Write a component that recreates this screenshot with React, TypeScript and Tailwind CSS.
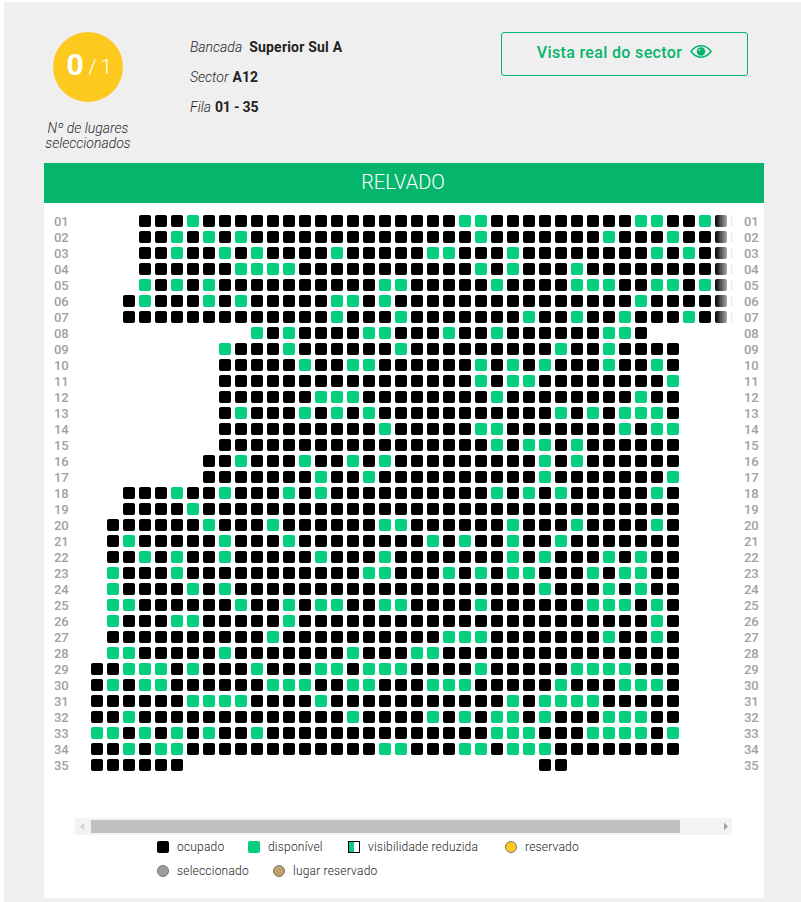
const rows: [number, number, number[]][] = [
  [3, 40, [6, 23, 24, 34, 35, 38]],
  [3, 40, [5, 7, 9, 24, 32, 36]],
  [3, 40, [5, 8, 10, 15, 21, 22, 26, 35, 37]],
  [3, 40, [9, 10, 11, 12, 24, 26, 30]],
  [3, 40, [3, 5, 7, 18, 19, 25, 30, 31, 32, 35, 36, 38]],
  [2, 40, [3, 7, 9, 15, 16, 18, 34]],
  [2, 40, [15, 19, 27, 30, 33, 37]],
  [10, 34, [10, 12, 17, 18, 22, 25, 32, 33]],
  [8, 36, [8, 12, 19, 29, 32]],
  [8, 36, [13, 16, 17, 24, 26, 28, 32, 35]],
  [8, 36, [24, 26, 27, 36]],
  [8, 36, [14, 15, 16, 25, 34]],
  [8, 36, [9, 13, 15, 17, 29, 31, 33, 34, 35]],
  [8, 36, [18, 24, 25, 33, 35, 36]],
  [8, 36, [25, 27, 28, 30]],
  [7, 36, [9, 13, 16, 18, 28, 30]],
  [7, 36, [14, 17, 28, 36]],
  [2, 36, [5, 8, 12, 14, 25, 27, 29, 35]],
  [2, 36, [6]],
  [1, 36, [7, 11, 18, 19, 26, 30, 35]],
  [1, 36, [2, 8, 12, 21, 23, 26, 29]],
  [1, 36, [3, 5, 8, 14, 18, 26, 28, 32, 34]],
  [1, 36, [1, 5, 17, 18, 22, 24, 26, 27, 31, 33, 34]],
  [1, 36, [1, 6, 8, 28, 32, 34]],
  [1, 36, [1, 2, 9, 12, 14, 15, 18, 19, 24, 31, 32, 33, 35]],
  [1, 36, [1, 5, 6, 12, 35]],
  [1, 36, [11, 22, 23, 24, 32, 35]],
  [1, 36, [1, 2, 8, 16, 20, 21]],
  [0, 36, [2, 3, 4, 6, 10, 14, 15, 17, 18, 19, 24, 30, 31, 32, 33]],
  [0, 36, [1, 3, 4, 11, 12, 13, 16, 17, 21, 22, 23, 29, 33, 34, 35]],
  [0, 36, [6, 7, 8, 9, 14, 26, 28, 29, 30, 31]],
  [0, 36, [2, 16, 21, 23, 25, 26, 28, 32, 33, 34]],
  [0, 36, [0, 1, 3, 5, 7, 10, 25, 26, 27, 31, 32, 33, 34, 36]],
  [0, 36, [2, 4, 5, 18, 19, 23, 24, 26, 27, 28]],
  [0, 29, []],
];

const cols = Array.from({ length: 41 }, (_, i) => i);

function seatClass(r: [number, number, number[]], c: number, rowIdx: number) {
  const [start, end, greens] = r;
  if (c < start || c > end) return "invisible";
  if (rowIdx === 34 && c > 5 && c < 28) return "invisible";
  return greens.includes(c) ? "bg-[#05cf7c]" : "bg-black";
}

function Labels({ side }: { side: "l" | "r" }) {
  return (
    <div className={side === "l" ? "w-[47px] shrink-0 pl-[10px]" : "pl-[11px]"}>
      {rows.map((_, i) => (
        <div key={i} className="h-4 leading-[13px] text-[13px] font-medium text-[#a0a0a0] tracking-[-0.2px]">
          {String(i + 1).padStart(2, "0")}
        </div>
      ))}
    </div>
  );
}

function Eye() {
  return (
    <svg width="22" height="13" viewBox="0 0 22 13" fill="none" className="-translate-y-0.5">
      <path d="M0.9 6.5C4 2.6 7 0.8 11 0.8s7 1.8 10.1 5.7C18 10.4 15 12.2 11 12.2S4 10.4 0.9 6.5Z" stroke="#05b56b" strokeWidth="1.5" />
      <circle cx="11" cy="6.5" r="4.2" fill="#05b56b" />
      <circle cx="9.5" cy="5" r="1.1" fill="#9fe3c4" />
    </svg>
  );
}

function Legend({ w, icon, label }: { w: string; icon: React.ReactNode; label: string }) {
  return (
    <div className={`flex items-center gap-2 ${w}`}>
      {icon}
      <span className="text-xs font-light tracking-[0.2px] leading-4 text-[#222]">{label}</span>
    </div>
  );
}

export default function App() {
  return (
    <div className="pt-[2px] pl-1 bg-white h-[902px] overflow-hidden" style={{ fontFamily: "Roboto, 'Liberation Sans', sans-serif" }}>
      <div className="bg-[#efefef] h-[900px] pb-1 flex flex-col">
        <div className="flex h-[161px] shrink-0 pl-10 pr-[53px] pt-[30px]">
          <div className="w-[88px] shrink-0 flex flex-col items-center">
            <div className="w-[70px] h-[70px] rounded-full bg-[#fdc91f] flex items-center justify-center text-white pb-[5px] pl-[2px]">
              <span className="text-[30px] font-bold leading-none">0</span>
              <span className="text-[20px] font-light leading-none ml-[5px] mt-1 tracking-[-0.3px]">/ 1</span>
            </div>
            <div className="mt-[19px] text-[14px] leading-[15px] italic font-light text-center text-[#2a2a2a] whitespace-nowrap">
              Nº de lugares<br />seleccionados
            </div>
          </div>
          <div className="ml-[58px] text-[14px] leading-[30px] text-[#222]">
            <div><span className="italic font-light">Bancada</span><span className="font-bold ml-[7px] tracking-[0.2px]">Superior Sul A</span></div>
            <div><span className="italic font-light">Sector</span><span className="font-bold ml-[4px]">A12</span></div>
            <div><span className="italic font-light">Fila</span><span className="font-bold ml-[4px] tracking-[-0.2px]">01 - 35</span></div>
          </div>
          <button className="ml-auto w-[247px] h-11 rounded-[3px] border border-[#05b56b] flex items-center justify-center gap-2 text-[#05b56b] text-base font-medium tracking-[0.35px] pb-[2px]">
            Vista real do sector
            <Eye />
          </button>
        </div>
        <div className="ml-10 w-[720px] flex-1 bg-white flex flex-col">
          <div className="h-10 bg-[#05b56b] text-white text-[20px] font-light flex items-center justify-center pb-[2px] pr-[2px]">RELVADO</div>
          <div className="flex pt-3">
            <Labels side="l" />
            <div className="relative w-[642px] overflow-hidden">
              {rows.map((r, i) => (
                <div key={i} className="flex gap-1 h-4">
                  {cols.map((c) => (
                    <div key={c} className={`w-3 h-3 shrink-0 rounded-[2px] ${seatClass(r, c, i)}`} />
                  ))}
                </div>
              ))}
              <div className="absolute right-0 top-0 bottom-0 w-[18px] bg-linear-to-r from-white/0 to-white" />
            </div>
            <Labels side="r" />
          </div>
          <div className="ml-[31px] mt-[43px] w-[657px] h-[17px] bg-[#f3f3f3] flex items-center shrink-0">
            <svg width="16" height="13" viewBox="0 0 16 13" className="shrink-0"><path d="M9 2.5v8l-4-4z" fill="#d2d2d2" /></svg>
            <div className="w-[589px] h-[13px] bg-[#c1c1c1]" />
            <svg width="52" height="13" viewBox="0 0 52 13" className="shrink-0"><path d="M44 2.5v8l4-4z" fill="#a3a3a3" /></svg>
          </div>
          <div className="ml-[113px] flex flex-col">
            <div className="flex h-6 items-center">
              <Legend w="w-[91px]" icon={<span className="w-3 h-3 rounded-[2px] bg-black" />} label="ocupado" />
              <Legend w="w-[100px]" icon={<span className="w-3 h-3 rounded-[2px] bg-[#05cf7c]" />} label="disponível" />
              <Legend
                w="w-[157px]"
                icon={
                  <span className="w-3 h-3 border border-black flex">
                    <span className="flex-1 bg-[#05cf7c]" />
                    <span className="flex-1 bg-white" />
                  </span>
                }
                label="visibilidade reduzida"
              />
              <Legend w="" icon={<span className="w-3 h-3 rounded-full bg-[#fdc91f] border border-[#777]" />} label="reservado" />
            </div>
            <div className="flex h-6 items-center">
              <Legend w="w-[116px]" icon={<span className="w-3 h-3 rounded-full bg-[#9a9d9c] border border-[#777]" />} label="seleccionado" />
              <Legend w="" icon={<span className="w-3 h-3 rounded-full bg-[#bda36b] border border-[#777]" />} label="lugar reservado" />
            </div>
          </div>
        </div>
      </div>
    </div>
  );
}
